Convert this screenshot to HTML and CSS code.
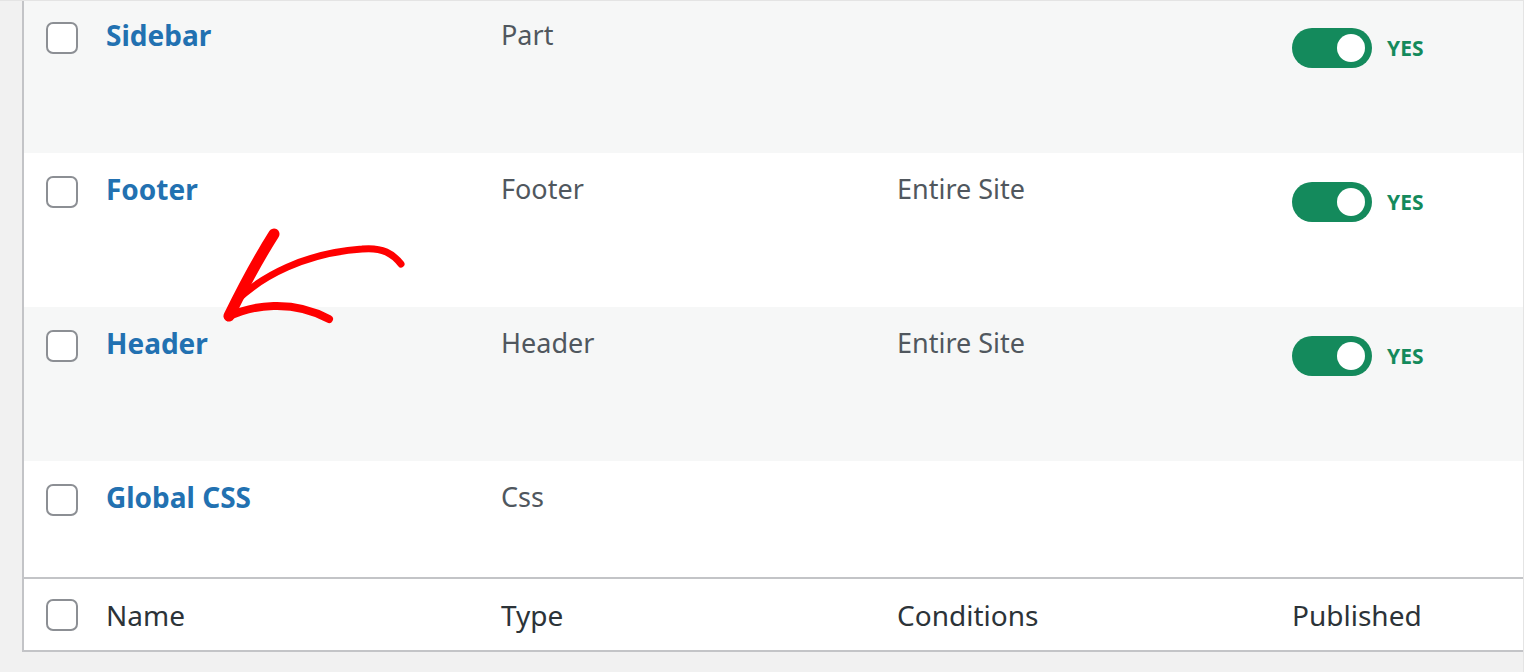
FILE: index.html
```html
<!DOCTYPE html>
<html lang="en">
<head>
<meta charset="utf-8">
<title>Templates</title>
<link rel="stylesheet" href="styles.css">
</head>
<body>
<div class="frame">
  <div class="table">
    <div class="row alt">
      <div class="cell-cb"><span class="cb"></span></div>
      <div class="cell"><a class="title" href="#">Sidebar</a></div>
      <div class="cell">Part</div>
      <div class="cell"></div>
      <div class="cell pub"><span class="toggle"><span class="knob"></span></span><span class="yes">YES</span></div>
    </div>
    <div class="row">
      <div class="cell-cb"><span class="cb"></span></div>
      <div class="cell"><a class="title" href="#">Footer</a></div>
      <div class="cell">Footer</div>
      <div class="cell">Entire Site</div>
      <div class="cell pub"><span class="toggle"><span class="knob"></span></span><span class="yes">YES</span></div>
    </div>
    <div class="row alt">
      <div class="cell-cb"><span class="cb"></span></div>
      <div class="cell"><a class="title" href="#">Header</a></div>
      <div class="cell">Header</div>
      <div class="cell">Entire Site</div>
      <div class="cell pub"><span class="toggle"><span class="knob"></span></span><span class="yes">YES</span></div>
    </div>
    <div class="row short">
      <div class="cell-cb"><span class="cb"></span></div>
      <div class="cell"><a class="title" href="#">Global CSS</a></div>
      <div class="cell">Css</div>
      <div class="cell"></div>
      <div class="cell"></div>
    </div>
    <div class="row foot">
      <div class="cell-cb"><span class="cb"></span></div>
      <div class="cell">Name</div>
      <div class="cell">Type</div>
      <div class="cell">Conditions</div>
      <div class="cell">Published</div>
    </div>
  </div>
  <svg class="arrow" viewBox="210 220 200 110" width="200" height="110" aria-hidden="true">
    <g fill="none" stroke="#ff0000" stroke-linecap="round" stroke-linejoin="round">
      <path d="M274 233 C262 252 246 280 229 315" stroke-width="11"/>
      <path d="M236 300 C262 275 305 252 362 248 C383 246 393 253 401 263" stroke-width="7"/>
      <path d="M228 316 C252 304 292 298 329 318" stroke-width="8"/>
    </g>
  </svg>
</div>
</body>
</html>
```

FILE: styles.css
```css
* { box-sizing: border-box; }

html, body {
  margin: 0;
  padding: 0;
}

body {
  background: #f1f1f1;
  font-family: "Noto Sans", "Open Sans", sans-serif;
  color: #50575e;
}

.frame {
  position: relative;
  width: 1524px;
  height: 672px;
  border-top: 1px solid #e4e4e4;
  border-right: 1px solid #e4e4e4;
  padding-left: 22px;
  overflow: hidden;
}

.table {
  background: #fff;
  border-left: 2px solid #c3c4c7;
  border-bottom: 2px solid #c3c4c7;
}

.row {
  display: grid;
  grid-template-columns: 82px 395px 396px 395px 1fr;
  align-items: start;
  height: 154px;
  padding-top: 18px;
  font-size: 27px;
  line-height: 36px;
}

.row:first-child {
  height: 152px;
  padding-top: 16px;
}

.row.alt { background: #f6f7f7; }

.row.short { height: 116px; }

.row.foot {
  height: 73px;
  padding-top: 0;
  align-items: center;
  border-top: 2px solid #c3c4c7;
  color: #2c3338;
  font-size: 28px;
}

.cell-cb {
  padding-left: 22px;
  display: flex;
}

.row .cell-cb { padding-top: 5px; }
.row.foot .cell-cb { padding-top: 0; }

.cb {
  display: block;
  width: 32px;
  height: 32px;
  border: 2px solid #8c8f94;
  border-radius: 7px;
  background: #fff;
}

.title {
  color: #2271b1;
  font-weight: 700;
  font-size: 28px;
  text-decoration: none;
}

.pub {
  display: flex;
  align-items: center;
  gap: 15px;
  padding-top: 11px;
}

.toggle {
  display: flex;
  align-items: center;
  justify-content: flex-end;
  width: 80px;
  height: 40px;
  padding: 0 7px;
  border-radius: 20px;
  background: #148a5c;
}

.knob {
  width: 28px;
  height: 28px;
  border-radius: 50%;
  background: #fff;
}

.yes {
  color: #148a5c;
  font-weight: 700;
  font-size: 21px;
  line-height: 24px;
}

.arrow {
  position: absolute;
  left: 210px;
  top: 220px;
  pointer-events: none;
}
```
